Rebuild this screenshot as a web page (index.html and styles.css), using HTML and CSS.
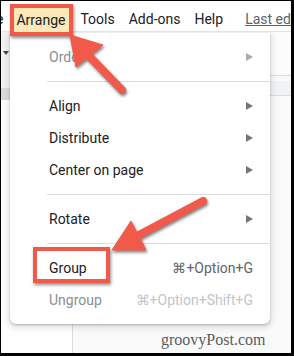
FILE: index.html
```html
<!DOCTYPE html>
<html lang="en">
<head>
  <meta charset="UTF-8" />
  <title>Arrange menu - Group</title>
  <link rel="stylesheet" href="styles.css">
</head>
<body>
  <div class="frame">
    <div class="menubar">
      <span class="mb-cut">e</span>
      <span class="mb-active">Arrange</span>
      <span class="mb-item">Tools</span>
      <span class="mb-item">Add-ons</span>
      <span class="mb-item">Help</span>
      <span class="mb-last">Last edit was seconds ago</span>
    </div>

    <div class="workspace">
      <div class="filmstrip">
        <div class="strip-tools"><span class="caret"></span></div>
        <div class="strip-gap"></div>
        <div class="strip-sel"></div>
      </div>
      <div class="canvas">
        <div class="canvas-tools"></div>
        <div class="ruler"><span class="tick"></span></div>
      </div>
    </div>

    <div class="dropdown">
      <div class="item off"><span class="label">Order</span><span class="sub"></span></div>
      <div class="sep"></div>
      <div class="item"><span class="label">Align</span><span class="sub"></span></div>
      <div class="item"><span class="label">Distribute</span><span class="sub"></span></div>
      <div class="item"><span class="label">Center on page</span><span class="sub"></span></div>
      <div class="sep"></div>
      <div class="item"><span class="label">Rotate</span><span class="sub"></span></div>
      <div class="sep"></div>
      <div class="item"><span class="label">Group</span><span class="keys">⌘+Option+G</span></div>
      <div class="item off"><span class="label">Ungroup</span><span class="keys">⌘+Option+Shift+G</span></div>
      <div class="callout"></div>
    </div>

    <!-- annotation arrows, page coordinates -->
    <svg class="arrows" width="294" height="356" viewBox="0 0 294 356">
      <g>
        <line x1="122" y1="90" x2="89" y2="56" />
        <polygon points="70,35 103,45 76,67" />
      </g>
      <g>
        <line x1="203" y1="201" x2="137" y2="236" />
        <polygon points="112,250 146,250 131,221" />
      </g>
    </svg>

    <div class="watermark">groovyPost.com</div>
  </div>
</body>
</html>
```

FILE: styles.css
```css
body {
  margin: 0;
  background: #000;
}
.frame {
  position: relative;
  width: 290px;
  height: 352px;
  margin: 1px 3px 3px 1px;
  background: #fff;
  overflow: hidden;
  font-family: Roboto, "Liberation Sans", Arial, sans-serif;
  font-size: 14px;
  color: #202124;
}

/* menu bar */
.menubar {
  position: relative;
  z-index: 5;
  display: flex;
  align-items: center;
  height: 30px;
  padding-top: 0;
  background: #fff;
  border-bottom: 1px solid #e3e3e3;
  white-space: nowrap;
}
.mb-cut {
  margin-left: -5px;
  margin-right: 7px;
  line-height: 20px;
  margin-top: 6px;
}
.mb-active {
  margin-top: 6px;
  line-height: 20px;
  padding: 2px 4px 2px 2px;
  margin-bottom: -12px;
  transform: translateY(-5px);
  border: 4px solid #f15a4a;
  background: #fde8b7;
  box-shadow: 1px 2px 3px rgba(0,0,0,0.45);
}
.mb-item {
  padding: 0 7px;
  line-height: 20px;
  margin-top: 6px;
}
.mb-last {
  margin-left: 15px;
  line-height: 20px;
  margin-top: 6px;
  color: #5f6368;
  text-decoration: underline;
}

/* app chrome behind the menu */
.workspace {
  display: flex;
  height: 321px;
}
.filmstrip {
  width: 71px;
  border-right: 1px solid #dadce0;
  background: #fff;
}
.strip-tools {
  height: 42px;
  background: #f3f3f3;
  padding-left: 2px;
  padding-top: 19px;
  box-sizing: border-box;
}
.caret {
  display: block;
  width: 0;
  height: 0;
  border-left: 3px solid transparent;
  border-right: 3px solid transparent;
  border-top: 4px solid #444;
}
.strip-gap {
  height: 14px;
  background: #f3f3f3;
}
.strip-sel {
  height: 12px;
  background: #dcdcdc;
}
.canvas {
  flex: 1;
  background: #fafafa;
}
.canvas-tools {
  height: 43px;
  background: #fcfcfc;
  border-bottom: 1px solid #dadce0;
}
.ruler {
  height: 14px;
  background: #f1f3f4;
  border-bottom: 1px solid #dadce0;
  padding-left: 148px;
}
.tick {
  display: block;
  width: 1px;
  height: 3px;
  margin-top: 5px;
  background: #999;
}

/* dropdown */
.dropdown {
  position: absolute;
  z-index: 4;
  left: 9px;
  top: 32px;
  width: 260px;
  padding: 8px 0;
  background: #fff;
  border-radius: 0 0 6px 6px;
  box-shadow: 0 1px 2px rgba(60,64,67,0.3), 0 2px 6px 2px rgba(60,64,67,0.15);
}
.item {
  display: flex;
  align-items: center;
  height: 32px;
  padding: 0 17px 0 39px;
  white-space: nowrap;
}
.label {
  flex: 1;
}
.sub {
  width: 0;
  height: 0;
  border-top: 4px solid transparent;
  border-bottom: 4px solid transparent;
  border-left: 7px solid #757575;
}
.keys {
  color: #5f6368;
}
.item.off {
  color: #8a8e93;
}
.item.off .keys {
  color: #c2c5c8;
}
.item.off .sub {
  border-left-color: #a8abb0;
}
.sep {
  height: 1px;
  margin: 8px 0 8px 37px;
  background: #dadce0;
}
.callout {
  position: absolute;
  left: 23px;
  top: 214px;
  width: 77px;
  height: 36px;
  box-sizing: border-box;
  border: 4px solid #f15a4a;
  box-shadow: 1px 2px 3px rgba(0,0,0,0.45);
}

/* annotations */
.arrows {
  position: absolute;
  z-index: 6;
  left: -1px;
  top: -1px;
  pointer-events: none;
}
.arrows g {
  fill: #f15a4a;
  stroke: #f15a4a;
  filter: drop-shadow(1px 2px 1.5px rgba(0,0,0,0.5));
}
.arrows line {
  stroke-width: 8;
  stroke-linecap: round;
}
.arrows polygon {
  stroke-width: 1;
  stroke-linejoin: round;
}
.watermark {
  position: absolute;
  z-index: 6;
  left: 160px;
  top: 330px;
  font-family: "Liberation Serif", serif;
  font-size: 16px;
  line-height: 18px;
  color: #5a5a5a;
}
```
